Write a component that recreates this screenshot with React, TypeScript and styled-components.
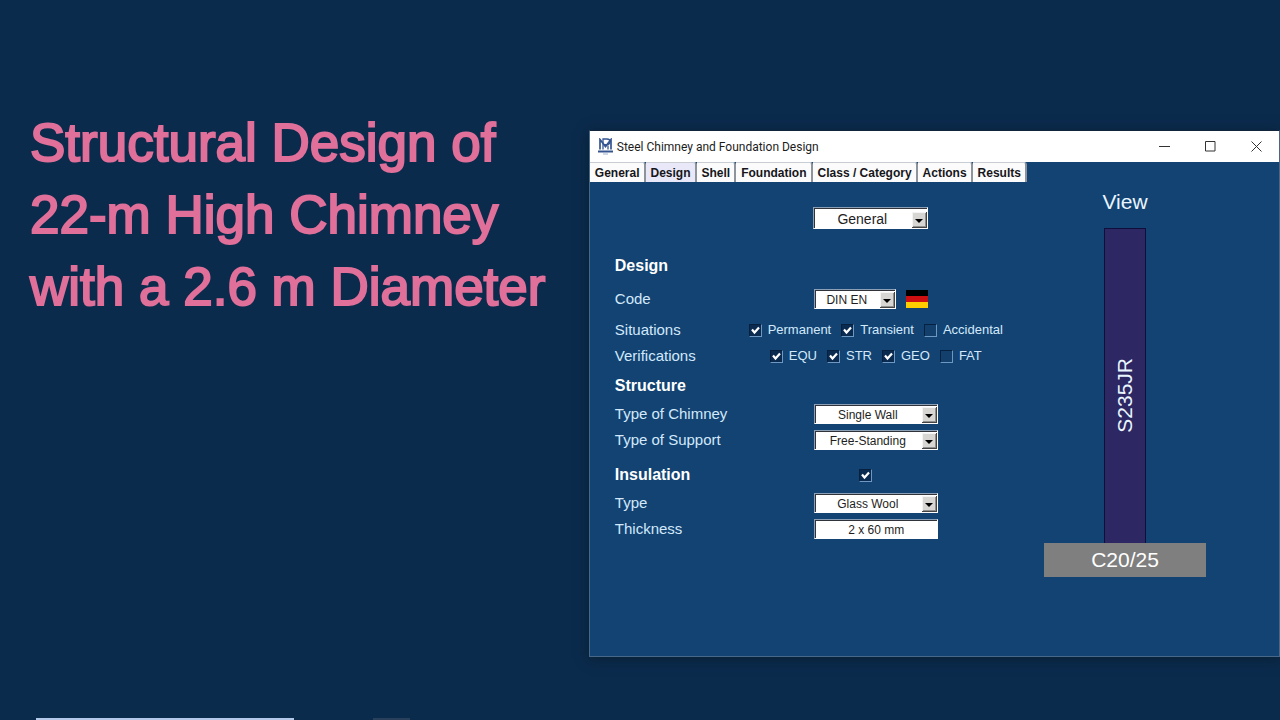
import React, { useState } from "react";
import styled, { createGlobalStyle } from "styled-components";

const GlobalStyle = createGlobalStyle`
  *, *::before, *::after { box-sizing: border-box; }
  body {
    margin: 0;
    background: #0b2b4d;
    font-family: "Liberation Sans", Arial, sans-serif;
  }
`;

const Page = styled.div`
  display: flex;
  flex-direction: column;
  min-height: 100vh;
`;

const Slide = styled.main`
  flex: 1;
  display: grid;
  grid-template-columns: 46fr 54fr;
  align-items: start;
`;

const Title = styled.h1`
  margin: 0;
  padding: 107px 0 0 30px;
  color: #e0709a;
  font-size: 53px;
  font-weight: 400;
  line-height: 72px;
  white-space: nowrap;
  -webkit-text-stroke: 2px #e0709a;
`;

const Line = styled.span`
  display: block;
`;

const Window = styled.section`
  margin-top: 130px;
  min-width: 0;
  border: 1px solid #48688a;
  border-top-color: #10243a;
  background: #124373;
  box-shadow: 0 2px 12px rgba(8, 28, 42, 0.8);
`;

const TitleBar = styled.header`
  display: flex;
  align-items: center;
  height: 31px;
  padding: 0 0 0 7px;
  background: #fff;
`;

const Caption = styled.span`
  flex: 1;
  padding-left: 3px;
  color: #1c1c1c;
  font-family: Roboto, "Noto Sans", sans-serif;
  font-size: 12px;
  line-height: 16px;
`;

const WindowButton = styled.button`
  display: flex;
  align-items: center;
  justify-content: center;
  width: 46px;
  height: 30px;
  padding: 0;
  border: 0;
  background: transparent;
`;

const Tabs = styled.nav`
  display: flex;
  height: 21px;
`;

const Tab = styled.button<{ $active: boolean }>`
  height: 20px;
  padding: 0 4px 0 5px;
  border: 0;
  border-top: 1px solid #c9cdd3;
  border-right: 2px solid #8f949c;
  border-top-right-radius: 3px;
  background: ${(p) => (p.$active ? "#e9e8f8" : "#fbfbfb")};
  color: #16161a;
  font: bold 12px/20px "Liberation Sans", Arial, sans-serif;
  white-space: nowrap;
`;

const Body = styled.div`
  display: flex;
  justify-content: space-between;
  padding: 0 73px 79px 25px;
`;

const Form = styled.form`
  display: flex;
  flex-direction: column;
  padding-top: 24px;
`;

const Section = styled.section<{ $gap: number }>`
  margin-top: ${(p) => p.$gap}px;
`;

const Row = styled.div<{ $height?: number }>`
  display: grid;
  grid-template-columns: 133px 256px;
  align-items: center;
  height: ${(p) => p.$height ?? 26}px;
`;

const Heading = styled.h2`
  margin: 0;
  padding-top: 2px;
  color: #fff;
  font-size: 16px;
  line-height: 20px;
`;

const labelText = `
  color: #d3e9fb;
  font-size: 15px;
  line-height: 20px;
  white-space: nowrap;
`;

const Label = styled.label`
  ${labelText}
`;

const GroupLabel = styled.span`
  ${labelText}
`;

const Field = styled.div`
  display: flex;
  align-items: center;
  gap: 10px;
  padding-left: 66px;
`;

const Checks = styled.div`
  display: flex;
  justify-content: center;
  gap: 10px;
`;

const SingleCheck = styled(Checks)`
  padding: 2px 20px 0 0;
`;

const CheckLabel = styled.label`
  display: flex;
  align-items: center;
  gap: 6px;
  color: #d3e9fb;
  font-size: 13px;
  line-height: 16px;
`;

const CheckBox = styled.input`
  appearance: none;
  width: 13px;
  height: 13px;
  margin: 0;
  border: 1px solid;
  border-color: #06203f #6d98c4 #6d98c4 #06203f;
  background: #133f6d;
  &:checked {
    background: #0a2a50
      url("data:image/svg+xml,%3Csvg xmlns='http://www.w3.org/2000/svg' viewBox='0 0 11 11'%3E%3Cpath d='M2 4.5l2.5 3L9 2.5' fill='none' stroke='white' stroke-width='2.2'/%3E%3C/svg%3E");
  }
`;

const Frame = styled.div<{ $width: number; $large?: boolean }>`
  display: flex;
  width: ${(p) => p.$width}px;
  height: ${(p) => (p.$large ? 22 : 20)}px;
  border: 1px solid;
  border-color: #8ba0b6 #fff #fff #8ba0b6;
  background: #fff;
  font-size: ${(p) => (p.$large ? 14 : 12)}px;
`;

const Combo = styled.select`
  appearance: none;
  flex: 1;
  min-width: 0;
  padding: 0 17px 0 0;
  border: 0;
  border-top: 1px solid #30343a;
  border-left: 1px solid #30343a;
  border-radius: 0;
  color: #1e1e22;
  font: inherit;
  text-align: center;
  text-align-last: center;
  background: #fff
    url("data:image/svg+xml,%3Csvg xmlns='http://www.w3.org/2000/svg' width='15' height='16' viewBox='0 0 15 16'%3E%3Cpath d='M0 0h15v16H0z' fill='%23444'/%3E%3Cpath d='M0 0h14v15H0z' fill='%23f4f4f4'/%3E%3Cpath d='M1 1h13v14H1z' fill='%23909090'/%3E%3Cpath d='M1 1h12v13H1z' fill='%23d8d6d2'/%3E%3Cpath d='M3 7h8L7 11z' fill='black'/%3E%3C/svg%3E")
    right bottom / 15px 16px no-repeat;
`;

const TextBox = styled.input`
  flex: 1;
  min-width: 0;
  padding: 0;
  border: 0;
  border-top: 1px solid #30343a;
  border-left: 1px solid #30343a;
  color: #1e1e22;
  background: #fff;
  font: inherit;
  text-align: center;
`;

const TopRow = styled.div`
  display: flex;
  padding-left: 198px;
`;

const Flag = styled.svg`
  display: block;
  width: 22px;
  height: 18px;
`;

const View = styled.figure`
  display: flex;
  flex-direction: column;
  align-items: center;
  width: 162px;
  margin: 0;
  padding-top: 7px;
  color: #e9f5ff;
  font-size: 21px;
  line-height: 24px;
`;

const Shaft = styled.div`
  display: flex;
  align-items: center;
  justify-content: center;
  width: 42px;
  height: 315px;
  margin-top: 14px;
  padding-top: 18px;
  border: 1px solid #100f3c;
  border-bottom: 0;
  background: #2d2763;
`;

const ShaftText = styled.span`
  writing-mode: vertical-rl;
  transform: rotate(180deg);
`;

const Base = styled.div`
  width: 100%;
  background: #7f7f7f;
  color: #fff;
  line-height: 34px;
  text-align: center;
`;

const Footer = styled.footer`
  display: flex;
  gap: 79px;
  height: 2px;
  padding-left: 36px;
`;

const Strip = styled.div<{ $width: number; $color: string }>`
  width: ${(p) => p.$width}px;
  background: ${(p) => p.$color};
`;

const tabNames = ["General", "Design", "Shell", "Foundation", "Class / Category", "Actions", "Results"];

function Logo() {
  return (
    <svg width="17" height="17" viewBox="0 0 17 17" fill="none" stroke="#34558f" aria-hidden="true">
      <path d="M3 11.500V1.500l5.500 7L14 1.500v10" strokeWidth="1.700" />
      <path d="M6 11.500V1h4q3 0 3 2.800T10 6.600H7" strokeWidth="1.300" />
      <path d="M11 7.500v4" strokeWidth="1.300" />
      <path d="M1 13.500h15" strokeWidth="2" />
      <path d="M6 16h5" stroke="#9fb2d0" />
    </svg>
  );
}

function Select({ id, value, width, large, name }: { id: string; value: string; width: number; large?: boolean; name?: string }) {
  return (
    <Frame $width={width} $large={large}>
      <Combo id={id} aria-label={name} defaultValue={value}>
        <option>{value}</option>
      </Combo>
    </Frame>
  );
}

function Check({ text, on }: { text: string; on?: boolean }) {
  return (
    <CheckLabel>
      <CheckBox type="checkbox" defaultChecked={on} />
      {text}
    </CheckLabel>
  );
}

export default function App() {
  const [tab, setTab] = useState("Design");
  return (
    <Page>
      <GlobalStyle />
      <Slide>
        <Title>
          <Line>Structural Design of</Line>
          <Line>22-m High Chimney</Line>
          <Line>with a 2.6 m Diameter</Line>
        </Title>
        <Window>
          <TitleBar>
            <Logo />
            <Caption>Steel Chimney and Foundation Design</Caption>
            <WindowButton aria-label="Minimize">
              <svg width="11" height="11" stroke="#333" fill="none"><path d="M0 5.500h11" /></svg>
            </WindowButton>
            <WindowButton aria-label="Maximize">
              <svg width="11" height="11" stroke="#333" fill="none"><path d="M.5.500h9.500v9.500H.5z" /></svg>
            </WindowButton>
            <WindowButton aria-label="Close">
              <svg width="11" height="11" stroke="#333" fill="none"><path d="M.5.500l10 10M10.500.500l-10 10" /></svg>
            </WindowButton>
          </TitleBar>
          <Tabs>
            {tabNames.map((name) => (
              <Tab key={name} type="button" $active={name === tab} onClick={() => setTab(name)}>
                {name}
              </Tab>
            ))}
          </Tabs>
          <Body>
            <Form>
              <TopRow>
                <Select id="page" name="Page" value="General" width={115} large />
              </TopRow>
              <Section $gap={20}>
                <Row $height={32}>
                  <Heading>Design</Heading>
                </Row>
                <Row $height={36}>
                  <Label htmlFor="code">Code</Label>
                  <Field>
                    <Select id="code" value="DIN EN" width={82} />
                    <Flag viewBox="0 0 22 18" role="img" aria-label="Germany">
                      <path d="M0 0h22v6H0z" fill="#000" />
                      <path d="M0 6h22v6H0z" fill="#d01010" />
                      <path d="M0 12h22v6H0z" fill="#fc0" />
                    </Flag>
                  </Field>
                </Row>
                <Row>
                  <GroupLabel id="situations">Situations</GroupLabel>
                  <Checks role="group" aria-labelledby="situations">
                    <Check text="Permanent" on />
                    <Check text="Transient" on />
                    <Check text="Accidental" />
                  </Checks>
                </Row>
                <Row>
                  <GroupLabel id="verifications">Verifications</GroupLabel>
                  <Checks role="group" aria-labelledby="verifications">
                    <Check text="EQU" on />
                    <Check text="STR" on />
                    <Check text="GEO" on />
                    <Check text="FAT" />
                  </Checks>
                </Row>
              </Section>
              <Section $gap={0}>
                <Row $height={32}>
                  <Heading>Structure</Heading>
                </Row>
                <Row>
                  <Label htmlFor="chimney">Type of Chimney</Label>
                  <Field>
                    <Select id="chimney" value="Single Wall" width={124} />
                  </Field>
                </Row>
                <Row>
                  <Label htmlFor="support">Type of Support</Label>
                  <Field>
                    <Select id="support" value="Free-Standing" width={124} />
                  </Field>
                </Row>
              </Section>
              <Section $gap={5}>
                <Row $height={32}>
                  <Heading>
                    <label htmlFor="insulation">Insulation</label>
                  </Heading>
                  <SingleCheck>
                    <CheckBox id="insulation" type="checkbox" defaultChecked />
                  </SingleCheck>
                </Row>
                <Row>
                  <Label htmlFor="type">Type</Label>
                  <Field>
                    <Select id="type" value="Glass Wool" width={124} />
                  </Field>
                </Row>
                <Row>
                  <Label htmlFor="thickness">Thickness</Label>
                  <Field>
                    <Frame $width={124}>
                      <TextBox id="thickness" defaultValue="2 x 60 mm" />
                    </Frame>
                  </Field>
                </Row>
              </Section>
            </Form>
            <View>
              <figcaption>View</figcaption>
              <Shaft>
                <ShaftText>S235JR</ShaftText>
              </Shaft>
              <Base>C20/25</Base>
            </View>
          </Body>
        </Window>
      </Slide>
      <Footer>
        <Strip $width={258} $color="#b4c8ea" />
        <Strip $width={37} $color="#29405c" />
      </Footer>
    </Page>
  );
}
